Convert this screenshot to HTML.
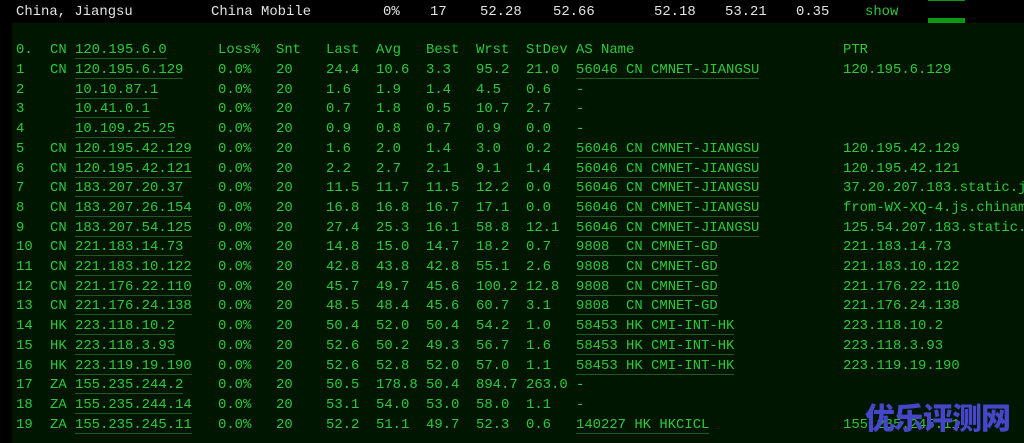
<!DOCTYPE html>
<html><head><meta charset="utf-8"><style>
html,body{margin:0;padding:0;background:#000;width:1024px;height:443px;overflow:hidden}
body{position:relative;font-family:"Liberation Mono","DejaVu Sans Mono",monospace;font-size:13.9px}
.top{position:absolute;top:0;left:0;width:1024px;height:23px;background:#000;color:#e4e4e4}
.top span{position:absolute;top:3px;line-height:18px;white-space:pre}
.panel{position:absolute;left:12px;top:23px;right:0;bottom:0;background:#011601}
.r{position:absolute;left:0;width:1024px;height:18px;line-height:18px;color:#2dc83a;white-space:pre}
.r span{position:absolute;top:0}
u{text-decoration:none;border-bottom:1px solid #1e5a22}
.bar{position:absolute;left:928px;width:37px;background:#0a9a14}
.wm{position:absolute;left:865px;top:398px;font-family:"Noto Sans CJK SC",sans-serif;font-weight:900;font-size:30px;color:#4646c8;letter-spacing:-1px;line-height:36px}
</style></head><body>
<div class="top">
<span style="left:16px">China, Jiangsu</span>
<span style="left:211px">China Mobile</span>
<span style="left:383px">0%</span>
<span style="left:430px">17</span>
<span style="left:480px">52.28</span>
<span style="left:553px">52.66</span>
<span style="left:654px">52.18</span>
<span style="left:725px">53.21</span>
<span style="left:796px">0.35</span>
<span style="left:865px;color:#2dc83a">show</span>
</div>
<div class="bar" style="top:0;height:1px"></div>
<div class="bar" style="top:18px;height:5px"></div>
<div class="panel"></div>

<div class="r" style="top:41px"><span style="left:16px">0.</span><span style="left:50px">CN</span><span style="left:75px"><u>120.195.6.0</u></span><span style="left:218px">Loss%</span><span style="left:276px">Snt</span><span style="left:326px">Last</span><span style="left:376px">Avg</span><span style="left:426px">Best</span><span style="left:476px">Wrst</span><span style="left:526px">StDev</span><span style="left:576px">AS Name</span><span style="left:843px">PTR</span></div>

<div class="r" style="top:61px"><span style="left:16px">1</span><span style="left:50px">CN</span><span style="left:75px"><u>120.195.6.129</u></span><span style="left:218px">0.0%</span><span style="left:276px">20</span><span style="left:326px">24.4</span><span style="left:376px">10.6</span><span style="left:426px">3.3</span><span style="left:476px">95.2</span><span style="left:526px">21.0</span><span style="left:576px"><u>56046 CN CMNET-JIANGSU</u></span><span style="left:843px">120.195.6.129</span></div>
<div class="r" style="top:80.7px"><span style="left:16px">2</span><span style="left:75px"><u>10.10.87.1</u></span><span style="left:218px">0.0%</span><span style="left:276px">20</span><span style="left:326px">1.6</span><span style="left:376px">1.9</span><span style="left:426px">1.4</span><span style="left:476px">4.5</span><span style="left:526px">0.6</span><span style="left:576px">-</span></div>
<div class="r" style="top:100.4px"><span style="left:16px">3</span><span style="left:75px"><u>10.41.0.1</u></span><span style="left:218px">0.0%</span><span style="left:276px">20</span><span style="left:326px">0.7</span><span style="left:376px">1.8</span><span style="left:426px">0.5</span><span style="left:476px">10.7</span><span style="left:526px">2.7</span><span style="left:576px">-</span></div>
<div class="r" style="top:120.1px"><span style="left:16px">4</span><span style="left:75px"><u>10.109.25.25</u></span><span style="left:218px">0.0%</span><span style="left:276px">20</span><span style="left:326px">0.9</span><span style="left:376px">0.8</span><span style="left:426px">0.7</span><span style="left:476px">0.9</span><span style="left:526px">0.0</span><span style="left:576px">-</span></div>
<div class="r" style="top:139.8px"><span style="left:16px">5</span><span style="left:50px">CN</span><span style="left:75px"><u>120.195.42.129</u></span><span style="left:218px">0.0%</span><span style="left:276px">20</span><span style="left:326px">1.6</span><span style="left:376px">2.0</span><span style="left:426px">1.4</span><span style="left:476px">3.0</span><span style="left:526px">0.2</span><span style="left:576px"><u>56046 CN CMNET-JIANGSU</u></span><span style="left:843px">120.195.42.129</span></div>
<div class="r" style="top:159.5px"><span style="left:16px">6</span><span style="left:50px">CN</span><span style="left:75px"><u>120.195.42.121</u></span><span style="left:218px">0.0%</span><span style="left:276px">20</span><span style="left:326px">2.2</span><span style="left:376px">2.7</span><span style="left:426px">2.1</span><span style="left:476px">9.1</span><span style="left:526px">1.4</span><span style="left:576px"><u>56046 CN CMNET-JIANGSU</u></span><span style="left:843px">120.195.42.121</span></div>
<div class="r" style="top:179.2px"><span style="left:16px">7</span><span style="left:50px">CN</span><span style="left:75px"><u>183.207.20.37</u></span><span style="left:218px">0.0%</span><span style="left:276px">20</span><span style="left:326px">11.5</span><span style="left:376px">11.7</span><span style="left:426px">11.5</span><span style="left:476px">12.2</span><span style="left:526px">0.0</span><span style="left:576px"><u>56046 CN CMNET-JIANGSU</u></span><span style="left:843px">37.20.207.183.static.js</span></div>
<div class="r" style="top:198.9px"><span style="left:16px">8</span><span style="left:50px">CN</span><span style="left:75px"><u>183.207.26.154</u></span><span style="left:218px">0.0%</span><span style="left:276px">20</span><span style="left:326px">16.8</span><span style="left:376px">16.8</span><span style="left:426px">16.7</span><span style="left:476px">17.1</span><span style="left:526px">0.0</span><span style="left:576px"><u>56046 CN CMNET-JIANGSU</u></span><span style="left:843px">from-WX-XQ-4.js.chinamobile</span></div>
<div class="r" style="top:218.6px"><span style="left:16px">9</span><span style="left:50px">CN</span><span style="left:75px"><u>183.207.54.125</u></span><span style="left:218px">0.0%</span><span style="left:276px">20</span><span style="left:326px">27.4</span><span style="left:376px">25.3</span><span style="left:426px">16.1</span><span style="left:476px">58.8</span><span style="left:526px">12.1</span><span style="left:576px"><u>56046 CN CMNET-JIANGSU</u></span><span style="left:843px">125.54.207.183.static.js</span></div>
<div class="r" style="top:238.3px"><span style="left:16px">10</span><span style="left:50px">CN</span><span style="left:75px"><u>221.183.14.73</u></span><span style="left:218px">0.0%</span><span style="left:276px">20</span><span style="left:326px">14.8</span><span style="left:376px">15.0</span><span style="left:426px">14.7</span><span style="left:476px">18.2</span><span style="left:526px">0.7</span><span style="left:576px"><u>9808  CN CMNET-GD</u></span><span style="left:843px">221.183.14.73</span></div>
<div class="r" style="top:258px"><span style="left:16px">11</span><span style="left:50px">CN</span><span style="left:75px"><u>221.183.10.122</u></span><span style="left:218px">0.0%</span><span style="left:276px">20</span><span style="left:326px">42.8</span><span style="left:376px">43.8</span><span style="left:426px">42.8</span><span style="left:476px">55.1</span><span style="left:526px">2.6</span><span style="left:576px"><u>9808  CN CMNET-GD</u></span><span style="left:843px">221.183.10.122</span></div>
<div class="r" style="top:277.7px"><span style="left:16px">12</span><span style="left:50px">CN</span><span style="left:75px"><u>221.176.22.110</u></span><span style="left:218px">0.0%</span><span style="left:276px">20</span><span style="left:326px">45.7</span><span style="left:376px">49.7</span><span style="left:426px">45.6</span><span style="left:476px">100.2</span><span style="left:526px">12.8</span><span style="left:576px"><u>9808  CN CMNET-GD</u></span><span style="left:843px">221.176.22.110</span></div>
<div class="r" style="top:297.4px"><span style="left:16px">13</span><span style="left:50px">CN</span><span style="left:75px"><u>221.176.24.138</u></span><span style="left:218px">0.0%</span><span style="left:276px">20</span><span style="left:326px">48.5</span><span style="left:376px">48.4</span><span style="left:426px">45.6</span><span style="left:476px">60.7</span><span style="left:526px">3.1</span><span style="left:576px"><u>9808  CN CMNET-GD</u></span><span style="left:843px">221.176.24.138</span></div>
<div class="r" style="top:317.1px"><span style="left:16px">14</span><span style="left:50px">HK</span><span style="left:75px"><u>223.118.10.2</u></span><span style="left:218px">0.0%</span><span style="left:276px">20</span><span style="left:326px">50.4</span><span style="left:376px">52.0</span><span style="left:426px">50.4</span><span style="left:476px">54.2</span><span style="left:526px">1.0</span><span style="left:576px"><u>58453 HK CMI-INT-HK</u></span><span style="left:843px">223.118.10.2</span></div>
<div class="r" style="top:336.8px"><span style="left:16px">15</span><span style="left:50px">HK</span><span style="left:75px"><u>223.118.3.93</u></span><span style="left:218px">0.0%</span><span style="left:276px">20</span><span style="left:326px">52.6</span><span style="left:376px">50.2</span><span style="left:426px">49.3</span><span style="left:476px">56.7</span><span style="left:526px">1.6</span><span style="left:576px"><u>58453 HK CMI-INT-HK</u></span><span style="left:843px">223.118.3.93</span></div>
<div class="r" style="top:356.5px"><span style="left:16px">16</span><span style="left:50px">HK</span><span style="left:75px"><u>223.119.19.190</u></span><span style="left:218px">0.0%</span><span style="left:276px">20</span><span style="left:326px">52.6</span><span style="left:376px">52.8</span><span style="left:426px">52.0</span><span style="left:476px">57.0</span><span style="left:526px">1.1</span><span style="left:576px"><u>58453 HK CMI-INT-HK</u></span><span style="left:843px">223.119.19.190</span></div>
<div class="r" style="top:376.2px"><span style="left:16px">17</span><span style="left:50px">ZA</span><span style="left:75px"><u>155.235.244.2</u></span><span style="left:218px">0.0%</span><span style="left:276px">20</span><span style="left:326px">50.5</span><span style="left:376px">178.8</span><span style="left:426px">50.4</span><span style="left:476px">894.7</span><span style="left:526px">263.0</span><span style="left:576px">-</span></div>
<div class="r" style="top:395.9px"><span style="left:16px">18</span><span style="left:50px">ZA</span><span style="left:75px"><u>155.235.244.14</u></span><span style="left:218px">0.0%</span><span style="left:276px">20</span><span style="left:326px">53.1</span><span style="left:376px">54.0</span><span style="left:426px">53.0</span><span style="left:476px">58.0</span><span style="left:526px">1.1</span><span style="left:576px">-</span></div>
<div class="r" style="top:415.6px"><span style="left:16px">19</span><span style="left:50px">ZA</span><span style="left:75px"><u>155.235.245.11</u></span><span style="left:218px">0.0%</span><span style="left:276px">20</span><span style="left:326px">52.2</span><span style="left:376px">51.1</span><span style="left:426px">49.7</span><span style="left:476px">52.3</span><span style="left:526px">0.6</span><span style="left:576px"><u>140227 HK HKCICL</u></span><span style="left:843px">155.235.245.11</span></div>

<div class="wm">优乐评测网</div>
</body></html>
